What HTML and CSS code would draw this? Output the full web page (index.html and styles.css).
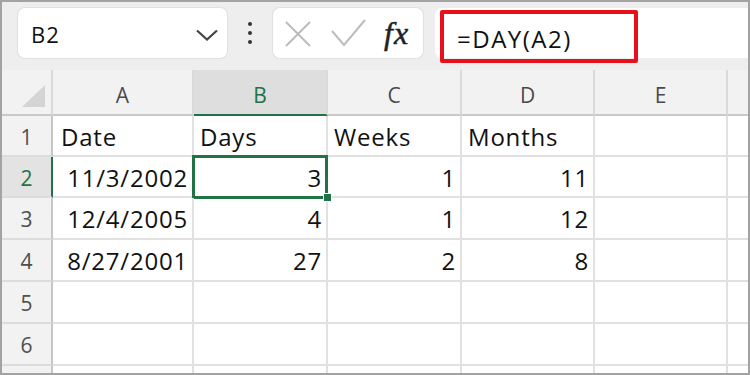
FILE: index.html
```html
<!DOCTYPE html>
<html>
<head>
<meta charset="utf-8">
<link rel="stylesheet" href="styles.css">
</head>
<body>
<div class="window">
  <div class="toolbar">
    <div class="namebox">
      <span class="ref">B2</span>
      <svg class="chev" width="22" height="12" viewBox="0 0 22 12"><path d="M1 1.5 L11 10.5 L21 1.5" fill="none" stroke="#444" stroke-width="2.2"/></svg>
    </div>
    <div class="dots"><i></i><i></i><i></i></div>
    <div class="fxbox">
      <svg class="ico-x" width="26" height="26" viewBox="0 0 26 26"><path d="M1 1 L25 25 M25 1 L1 25" stroke="#bcbcbc" stroke-width="2" fill="none"/></svg>
      <svg class="ico-check" width="35" height="28" viewBox="0 0 35 28"><path d="M1 12 L13 26 L34 1" stroke="#bcbcbc" stroke-width="2" fill="none"/></svg>
      <span class="fx">fx</span>
    </div>
    <div class="formula">
      <span class="ftext">=DAY(A2)</span>
      <div class="highlight"></div>
    </div>
  </div>
  <div class="sheet">
    <div class="c h corner"><svg width="23" height="22" viewBox="0 0 23 22"><path d="M23 0 L23 22 L0 22 Z" fill="#d4d4d4"/></svg></div>
    <div class="c h">A</div>
    <div class="c h on">B</div>
    <div class="c h">C</div>
    <div class="c h">D</div>
    <div class="c h">E</div>
    <div class="c h last"></div>

    <div class="c r">1</div>
    <div class="c t a">Date</div>
    <div class="c t">Days</div>
    <div class="c t">Weeks</div>
    <div class="c t">Months</div>
    <div class="c"></div>
    <div class="c last"></div>

    <div class="c r on">2</div>
    <div class="c n">11/3/2002</div>
    <div class="c n sel">3</div>
    <div class="c n">1</div>
    <div class="c n">11</div>
    <div class="c"></div>
    <div class="c last"></div>

    <div class="c r">3</div>
    <div class="c n">12/4/2005</div>
    <div class="c n">4</div>
    <div class="c n">1</div>
    <div class="c n">12</div>
    <div class="c"></div>
    <div class="c last"></div>

    <div class="c r">4</div>
    <div class="c n">8/27/2001</div>
    <div class="c n">27</div>
    <div class="c n">2</div>
    <div class="c n">8</div>
    <div class="c"></div>
    <div class="c last"></div>

    <div class="c r">5</div>
    <div class="c"></div>
    <div class="c"></div>
    <div class="c"></div>
    <div class="c"></div>
    <div class="c"></div>
    <div class="c last"></div>

    <div class="c r">6</div>
    <div class="c"></div>
    <div class="c"></div>
    <div class="c"></div>
    <div class="c"></div>
    <div class="c"></div>
    <div class="c last"></div>

    <div class="c r end"></div>
    <div class="c end"></div>
    <div class="c end"></div>
    <div class="c end"></div>
    <div class="c end"></div>
    <div class="c end"></div>
    <div class="c end last"></div>
  </div>
</div>
</body>
</html>
```

FILE: styles.css
```css
html, body {
  margin: 0;
  padding: 0;
  background: #fff;
}

.window {
  width: 750px;
  height: 375px;
  box-sizing: border-box;
  border: 2px solid #a3a3a3;
  overflow: hidden;
  background: #fff;
  display: flex;
  flex-direction: column;
  font-family: "Open Sans", "Noto Sans", sans-serif;
}

/* ---------- toolbar ---------- */
.toolbar {
  flex: none;
  height: 68px;
  box-sizing: border-box;
  background: #eeeeee;
  display: flex;
  align-items: flex-start;
  padding: 6px 0 0 16px;
}

.namebox {
  width: 209px;
  height: 50px;
  box-sizing: border-box;
  background: #fff;
  border-radius: 7px;
  box-shadow: 0 0 0 1px #e0e0e0;
  display: flex;
  align-items: center;
  justify-content: space-between;
  padding: 2px 9px 0 13px;
}

.ref {
  font-size: 22px;
  line-height: 24px;
  letter-spacing: 1px;
  color: #111;
}

.chev {
  display: block;
  margin-top: 2px;
}

.dots {
  width: 46px;
  height: 50px;
  display: flex;
  flex-direction: column;
  align-items: center;
  justify-content: center;
  gap: 5px;
}

.dots i {
  display: block;
  width: 4px;
  height: 4px;
  border-radius: 50%;
  background: #333;
}

.fxbox {
  width: 150px;
  height: 50px;
  box-sizing: border-box;
  background: #fff;
  border-radius: 7px;
  box-shadow: 0 0 0 1px #e0e0e0;
  display: flex;
  align-items: center;
  padding-left: 12px;
}

.ico-x {
  display: block;
  margin-top: 1px;
}

.ico-check {
  display: block;
  margin-left: 20px;
}

.fx {
  margin-left: 18px;
  font-family: "Liberation Serif", "DejaVu Serif", serif;
  font-style: italic;
  font-size: 32px;
  line-height: 30px;
  letter-spacing: 1px;
  color: #222;
  -webkit-text-stroke: 0.5px #222;
}

.formula {
  flex: 1;
  margin-left: 12px;
  height: 50px;
  background: #fff;
  border-radius: 7px 0 0 7px;
  position: relative;
  display: flex;
  align-items: flex-start;
  padding: 19px 0 0 22px;
  box-sizing: border-box;
}

.ftext {
  font-size: 24px;
  line-height: 24px;
  letter-spacing: 1.5px;
  color: #111;
}

.highlight {
  position: absolute;
  left: 5px;
  top: 2px;
  width: 198px;
  height: 53px;
  box-sizing: border-box;
  border: 4px solid #e8101a;
  border-radius: 2px;
}

/* ---------- sheet ---------- */
.sheet {
  flex: 1;
  display: grid;
  grid-template-columns: 51px 141px 134px 134px 133px 133px 1fr;
  grid-template-rows: 46px 41px 41px 42px 42px 42px 42px 1fr;
  min-height: 0;
}

.c {
  box-sizing: border-box;
  border-right: 2px solid #e1e1e1;
  border-bottom: 2px solid #e1e1e1;
  display: flex;
  align-items: center;
  padding: 2px 4px 0 6px;
  font-size: 24px;
  line-height: 24px;
  letter-spacing: 0.8px;
  color: #111;
  white-space: nowrap;
  min-width: 0;
  position: relative;
}

.c.last {
  border-right: none;
}

.c.end {
  border-bottom: none;
}

.t.a {
  padding-left: 8px;
}

.n {
  justify-content: flex-end;
}

/* column headers */
.h {
  background: #f2f2f2;
  justify-content: center;
  padding: 6px 0 0;
  font-size: 21px;
  letter-spacing: 0;
  color: #4a4a4a;
  border-right-color: #dadada;
  border-bottom-color: #c9c9c9;
}

.h.on {
  background: #dedede;
  color: #217346;
  border-bottom-color: #217346;
}

.corner {
  justify-content: flex-end;
  align-items: flex-end;
  padding: 0 6px 7px 0;
}

.corner svg {
  display: block;
}

/* row headers */
.r {
  background: #f2f2f2;
  justify-content: center;
  padding: 2px 0 0;
  font-size: 21px;
  letter-spacing: 0;
  color: #4f4f4f;
  border-right-color: #c6c6c6;
  border-bottom-color: #dcdcdc;
}

.r.on {
  background: #e3e3e3;
  color: #217346;
  border-right-color: #217346;
}

/* selected cell */
.sel::after {
  content: "";
  position: absolute;
  top: -2px;
  left: -2px;
  right: -2px;
  bottom: -3px;
  border: 3px solid #217346;
  pointer-events: none;
}

.sel::before {
  content: "";
  position: absolute;
  right: -6px;
  bottom: -6px;
  width: 7px;
  height: 7px;
  background: #217346;
  border: 1px solid #fff;
  z-index: 2;
}
```
